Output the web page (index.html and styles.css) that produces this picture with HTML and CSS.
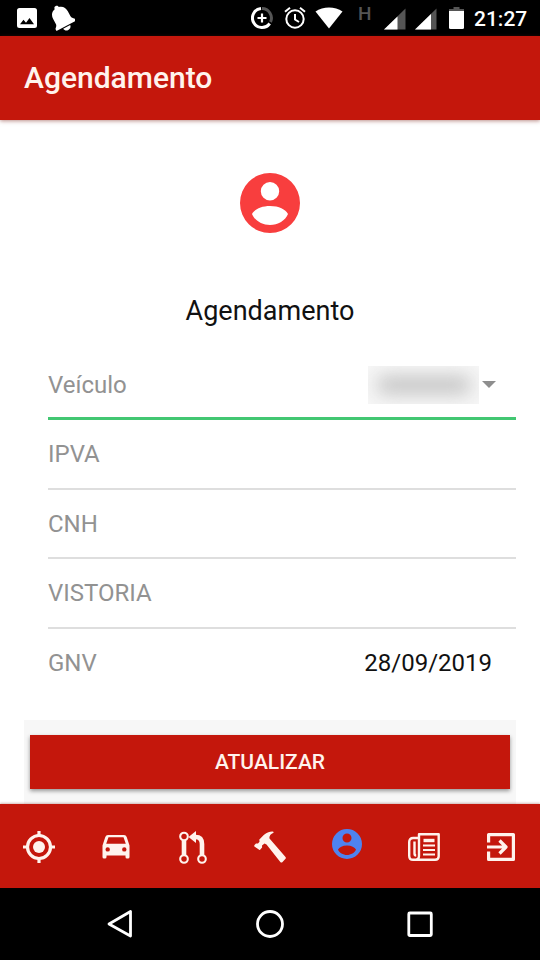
FILE: index.html
```html
<!DOCTYPE html>
<html lang="pt-BR">
<head>
<meta charset="utf-8">
<title>Agendamento</title>
<link rel="stylesheet" href="styles.css">
</head>
<body>
<div class="status">
  <svg class="s-image" width="20" height="20" viewBox="0 0 20 20"><path fill="#fff" fill-rule="evenodd" d="M2.500 0h15A2.500 2.500 0 0 1 20 2.500v15a2.500 2.500 0 0 1-2.500 2.500h-15A2.500 2.500 0 0 1 0 17.500v-15A2.500 2.500 0 0 1 2.500 0zM3 16.300h14l-4.500-6.300-3.500 4.700-2.500-3z"/></svg>
  <svg class="s-bell" width="26" height="28" viewBox="0 0 26 28"><g fill="#fff" transform="rotate(-28 13 14)"><path d="M13 .5c1.500 0 2.300 1 2.300 2.300 4 .8 6 4 6 8v5.700c0 2 1.200 2.500 2.700 4.200v2.300H2v-2.300c1.500-1.700 2.700-2.200 2.700-4.200v-5.700c0-4 2-7.200 6-8C10.700 1.500 11.500.5 13 .5z"/><path d="M9 24h8c-.3 2.300-1.900 3.500-4 3.500s-3.700-1.200-4-3.500z"/></g></svg>
  <svg class="s-data" width="22" height="22" viewBox="0 0 22 22" fill="none"><path stroke="#555" stroke-width="3" d="M11 1.500a9.500 9.500 0 0 1 8.500 13.500"/><path stroke="#fff" stroke-width="3" d="M10 1.500a9.500 9.500 0 1 0 8.700 15"/><path stroke="#fff" stroke-width="2.200" d="M11 6.500v9M6.500 11h9"/></svg>
  <svg class="s-alarm" width="22" height="22" viewBox="0 0 22 22" fill="none" stroke="#fff" stroke-width="2"><circle cx="11" cy="12" r="8.700"/><path d="M11 7v5.500l4 2.500M1 4.800L6 .8M21 4.800L16 .8"/></svg>
  <svg class="s-wifi" width="28" height="22" viewBox="0 0 28 22"><path fill="#fff" d="M.5 4.500C8-.8 20-.8 27.500 4.500L14 21.500z"/></svg>
  <span class="s-net">H</span>
  <svg class="s-signal" width="22" height="22" viewBox="0 0 22 22"><path fill="#555" d="M21.500.5v21H0z"/><path fill="#fff" d="M13.500 8.500v13H0z"/></svg>
  <svg class="s-signal2" width="22" height="22" viewBox="0 0 22 22"><path fill="#555" d="M21.500.5v21H0z"/><path fill="#fff" d="M16 6v15.500H0z"/></svg>
  <svg class="s-battery" width="15" height="22" viewBox="0 0 15 22"><path fill="#555" d="M4.500 0h6v2H15v3H0V2h4.500z"/><path fill="#fff" d="M0 4h15v16.500q0 1.500-1.500 1.500h-12Q0 22 0 20.500z"/></svg>
  <span class="clock">21:27</span>
</div>
<header class="header"><h1>Agendamento</h1></header>
<main class="content">
  <svg class="avatar" viewBox="0 0 60 60"><path fill="#f83e3e" fill-rule="evenodd" d="M30 0a30 30 0 1 1 0 60a30 30 0 1 1 0-60zM30 9a9.200 9.200 0 1 0 0 18.400a9.200 9.200 0 1 0 0-18.400zM30 33C21 33 14.500 36.500 12 41C14.500 47.500 22 52 30 52S45.500 47.500 48 41C45.500 36.500 39 33 30 33z"/></svg>
  <h2>Agendamento</h2>
  <div class="form">
    <div class="row active"><span class="label">Veículo</span><span class="plate"><span class="blot"></span></span><span class="caret"></span></div>
    <div class="row"><span class="label">IPVA</span></div>
    <div class="row"><span class="label">CNH</span></div>
    <div class="row"><span class="label">VISTORIA</span></div>
    <div class="row last"><span class="label">GNV</span><span class="date">28/09/2019</span></div>
  </div>
  <div class="action"><button class="update">ATUALIZAR</button></div>
</main>
<nav class="tabs">
  <span class="tab"><svg width="32" height="32" viewBox="0 0 32 32" fill="none" stroke="#fff3ed" stroke-width="3.200"><circle cx="16" cy="16" r="11.500"/><circle cx="16" cy="16" r="6" fill="#fff3ed" stroke="none"/><path d="M16 0v5M16 27v5M0 16h5M27 16h5"/></svg></span>
  <span class="tab"><svg width="28" height="24" viewBox="0 0 28 24"><path fill="#fff3ed" fill-rule="evenodd" d="M6 0h16q2 0 2.700 2L27.500 10.500V22q0 1.500-1.500 1.500H25q-1.500 0-1.500-1.500v-1.500h-19V22q0 1.500-1.500 1.500H2Q.5 23.500.5 22V10.500L3.300 2Q4 0 6 0zM6.500 2.300L4.200 8.800h19.600L21.500 2.300zM5.700 12.200a2.200 2.200 0 1 0 0 4.400a2.200 2.200 0 1 0 0-4.400zM22.300 12.200a2.200 2.200 0 1 0 0 4.400a2.200 2.200 0 1 0 0-4.400z"/></svg></span>
  <span class="tab"><svg width="28" height="33" viewBox="0 0 28 33" fill="none" stroke="#fff3ed"><g stroke-width="2.100"><circle cx="5" cy="5.500" r="3.800"/><circle cx="5" cy="28" r="3.800"/><circle cx="23" cy="28" r="3.800"/></g><path stroke-width="4.600" d="M5 9.500v14.800M23 24.300V13q0-7-6.500-7H15"/><path fill="#fff3ed" stroke="none" d="M9.500 6L17 0v12z"/></svg></span>
  <span class="tab"><svg width="32" height="32" viewBox="0 0 32 32"><path fill="#fff3ed" d="M.5 14L2 12.500l2 .1 1.500-1.800-.2-2.300C9 4.500 13 .2 18.500.4q1.400.1 1 1.300C16.500 3 15 5 15.500 7.500L31.500 26q.8 1-.2 2l-3 3.200q-1 .8-2-.3L12.500 13.500 10.500 12.500 8 14.500l.1 2-2 2.200q-.7.5-1.300-.1L.4 15.500q-.4-.8.100-1.500z"/></svg></span>
  <span class="tab"><svg class="me" width="30" height="30" viewBox="0 0 60 60"><path fill="#4f83ef" fill-rule="evenodd" d="M30 0a30 30 0 1 1 0 60a30 30 0 1 1 0-60zM30 9a9 9 0 1 0 0 18a9 9 0 1 0 0-18zM30 33C21 33 14.500 36.500 12 41C14.500 47.500 22 52 30 52S45.500 47.500 48 41C45.500 36.500 39 33 30 33z"/></svg></span>
  <span class="tab"><svg width="32" height="28" viewBox="0 0 32 28" fill="none" stroke="#fff3ed" stroke-width="2.400" stroke-linejoin="round"><path d="M11 1.200h19.700v22q0 3.600-3.600 3.600H5q-3.800 0-3.800-4V9q0-4 4-4H11zM11 5v18q0 3.800-4.500 3.800M6.500 8.500v12q0 2 1.700 2"/><path stroke-width="3.400" d="M15.500 7.500h11"/><path stroke-width="2.200" d="M15 12.500h12M15 17h12M15 21.500h12"/></svg></span>
  <span class="tab"><svg width="28" height="28" viewBox="0 0 28 28" fill="none" stroke="#fff3ed" stroke-width="3.200"><path stroke-linejoin="round" d="M1.600 9.500V1.600h24.800v24.800H1.600v-8M0 14h19M12.500 7.500L19 14l-6.500 6.500"/></svg></span>
</nav>
<div class="sysnav">
  <svg width="28" height="30" viewBox="0 0 28 30" fill="none" stroke="#fff" stroke-width="2.800" stroke-linejoin="round"><path d="M24.500 2.500v24.500L3 15z"/></svg>
  <svg width="28" height="30" viewBox="0 0 28 30" fill="none" stroke="#fff" stroke-width="2.800"><circle cx="14" cy="15" r="12.500"/></svg>
  <svg width="28" height="30" viewBox="0 0 28 30" fill="none" stroke="#fff" stroke-width="2.800"><rect x="2.800" y="4" width="22.500" height="22.500" rx="1"/></svg>
</div>
</body>
</html>
```
FILE: styles.css
```css
* { box-sizing: border-box; }
body { margin: 0; width: 540px; height: 960px; display: flex; flex-direction: column; background: #fff; font-family: Roboto, sans-serif; color: #111; overflow: hidden; }
svg { display: block; flex: none; }
.status { height: 36px; flex: none; background: #000; display: flex; align-items: flex-start; color: #fff; }
.s-image { margin: 8px 0 0 17px; }
.s-bell { margin: 4px 0 0 12px; }
.s-data { margin: 7px 0 0 176px; }
.s-alarm { margin: 7px 0 0 11px; }
.s-wifi { margin: 7px 0 0 9px; }
.s-net { width: 14px; margin: 4px 0 0 15px; font-size: 19px; line-height: 20px; font-weight: 500; color: #555; }
.s-signal { margin: 8px 0 0 12px; }
.s-signal2 { margin: 8px 0 0 9px; }
.s-battery { margin: 7px 0 0 12px; }
.clock { margin: 7px 0 0 10px; font-size: 21px; line-height: 24px; font-weight: 500; white-space: nowrap; }
.header { height: 84px; flex: none; background: #c4170c; color: #fff3ed; display: flex; align-items: center; padding-left: 24px; box-shadow: 0 1px 4px rgba(120, 30, 20, .5); z-index: 1; }
h1, h2 { margin: 0; }
h1 { font-size: 30px; line-height: 36px; font-weight: 500; }
.content { height: 684px; flex: none; display: flex; flex-direction: column; }
.avatar { width: 60px; height: 60px; margin: 53px auto 0; }
h2 { margin-top: 60px; text-align: center; font-size: 27px; line-height: 36px; font-weight: 400; }
.form { margin: 21px 24px 0 48px; }
.row { height: 69.5px; display: flex; align-items: center; border-bottom: 2px solid #dedede; font-size: 24px; padding-top: 1px; }
.row.active { height: 70px; border-bottom: 3px solid #42c772; padding-top: 2px; }
.row.last { height: 69px; border: 0; padding: 0 24px 0 0; }
.label { color: #929292; flex: 1; }
.plate { width: 111px; height: 38px; background: #f6f6f6; overflow: hidden; display: flex; align-items: center; justify-content: center; }
.blot { width: 94px; height: 18px; background: #c4c4c4; border-radius: 8px; filter: blur(9px); }
.caret { margin: 0 20px 0 3px; border: 7px solid transparent; border-top-color: #8e8e8e; border-bottom: 0; }
.action { height: 84px; margin: 22px 24px 0; padding: 15px 6px; background: #f7f7f7; }
.update { display: block; width: 100%; height: 54px; border: 0; padding: 0; background: #c4170c; color: #fff3ed; font: 500 21px Roboto, sans-serif; box-shadow: 0 2px 4px rgba(0, 0, 0, .4); }
.tabs { height: 84px; flex: none; background: #c4170c; display: grid; grid-template-columns: repeat(7, 1fr); padding-top: 2px; box-shadow: 0 -1px 2px rgba(120, 30, 20, .3); z-index: 1; }
.tab { display: flex; align-items: center; justify-content: center; }
.me { margin-bottom: 7px; }
.sysnav { height: 72px; flex: none; background: #000; display: flex; align-items: center; justify-content: space-between; padding: 0 106px; }
```
